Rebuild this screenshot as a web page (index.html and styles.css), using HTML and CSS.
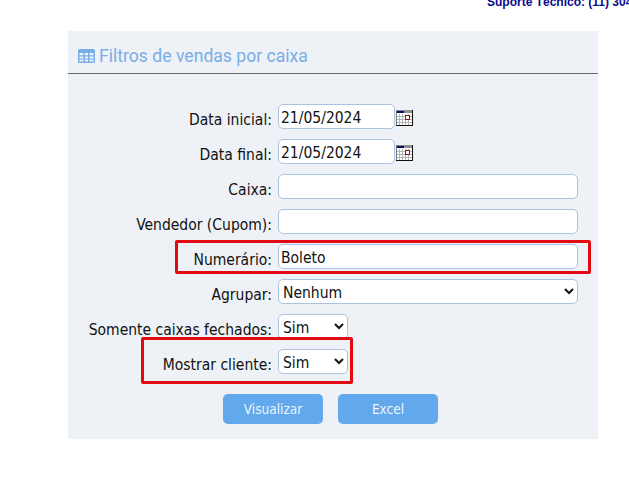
FILE: index.html
```html
<!DOCTYPE html>
<html lang="pt-BR">
<head>
<meta charset="utf-8">
<title>Filtros de vendas por caixa</title>
<link rel="stylesheet" href="styles.css">
</head>
<body>
<div class="support">Suporte Técnico: (11) 304</div>
<main class="panel">
  <h1 class="title">
    <svg class="title-icon" width="17" height="14" viewBox="0 0 17 14" aria-hidden="true">
      <path fill-rule="evenodd" fill="#7aaee6" d="M1.5 0h14A1.5 1.5 0 0 1 17 1.5v11a1.5 1.5 0 0 1-1.500 1.500h-14A1.500 1.500 0 0 1 0 12.500v-11A1.500 1.500 0 0 1 1.500 0zM1.500 4v2.200h4V4zm5.500 0v2.200h3V4zm4.500 0v2.200h4V4zM1.500 7.400v2h4v-2zm5.500 0v2h3v-2zm4.500 0v2h4v-2zM1.500 10.600v2h4v-2zm5.500 0v2h3v-2zm4.500 0v2h4v-2z"/>
    </svg>
    <span>Filtros de vendas por caixa</span>
  </h1>
  <form class="form">
    <label class="lbl">Data inicial:</label>
    <div class="ctl"><input class="field date" value="21/05/2024"><svg class="cal" width="17" height="16" viewBox="0 0 17 16" aria-hidden="true"><rect x="0" y="0" width="16" height="15" fill="#fff"/><rect x="0" y="0" width="16" height="3" fill="#8f8f8f"/><rect x="1" y="1" width="7" height="2" fill="#0a0a6e"/><path d="M1 6.500h15M1 9.500h15M1 12.500h15M3.500 4v11M6.500 4v11M9.500 4v11M12.500 4v11" stroke="#b5b5b5" fill="none"/><rect x="9.500" y="5.500" width="4" height="4" fill="#fff" stroke="#8b1a1a"/><path d="M16.500 0v16M0 15.500h17" stroke="#111" fill="none"/><path d="M0.500 0v15" stroke="#777"/></svg></div>
    <label class="lbl">Data final:</label>
    <div class="ctl"><input class="field date" value="21/05/2024"><svg class="cal" width="17" height="16" viewBox="0 0 17 16" aria-hidden="true"><rect x="0" y="0" width="16" height="15" fill="#fff"/><rect x="0" y="0" width="16" height="3" fill="#8f8f8f"/><rect x="1" y="1" width="7" height="2" fill="#0a0a6e"/><path d="M1 6.500h15M1 9.500h15M1 12.500h15M3.500 4v11M6.500 4v11M9.500 4v11M12.500 4v11" stroke="#b5b5b5" fill="none"/><rect x="9.500" y="5.500" width="4" height="4" fill="#fff" stroke="#8b1a1a"/><path d="M16.500 0v16M0 15.500h17" stroke="#111" fill="none"/><path d="M0.500 0v15" stroke="#777"/></svg></div>
    <label class="lbl">Caixa:</label>
    <div class="ctl"><input class="field wide"></div>
    <label class="lbl">Vendedor (Cupom):</label>
    <div class="ctl"><input class="field wide"></div>
    <label class="lbl">Numerário:</label>
    <div class="ctl"><input class="field wide" value="Boleto"></div>
    <label class="lbl">Agrupar:</label>
    <div class="ctl"><select class="field wide"><option>Nenhum</option></select></div>
    <label class="lbl">Somente caixas fechados:</label>
    <div class="ctl"><select class="field short"><option>Sim</option></select></div>
    <label class="lbl">Mostrar cliente:</label>
    <div class="ctl"><select class="field short"><option>Sim</option></select></div>
  </form>
  <div class="actions">
    <button class="btn" type="button">Visualizar</button>
    <button class="btn" type="button">Excel</button>
  </div>
</main>
<div class="mark mark-num"></div>
<div class="mark mark-cli"></div>
</body>
</html>
```
FILE: styles.css
```css
* { box-sizing: border-box; }
html, body { margin: 0; padding: 0; background: #fff; overflow: hidden; }
body { width: 629px; height: 480px; position: relative; font-family: "DejaVu Sans", sans-serif; font-stretch: condensed; color: #111; }
.support {
  height: 31px;
  margin-top: -5px;
  margin-bottom: 5px;
  padding-left: 487px;
  white-space: nowrap;
  font: bold 12px "Liberation Sans", sans-serif;
  color: #0a0a8c;
}
.panel { width: 530px; height: 408px; margin-left: 68px; background: #eef1f6; }
.title {
  height: 43px;
  margin: 0;
  padding: 15px 0 0 10px;
  display: flex;
  align-items: flex-start;
  gap: 4px;
  font: 400 17.600px/20px Roboto, sans-serif;
  color: #7aaee6;
  border-bottom: 1px solid #666a70;
}
.title-icon { margin-top: 3px; }
.form {
  margin-top: 30px;
  display: grid;
  grid-template-columns: 204px 1fr;
  column-gap: 6px;
  row-gap: 10px;
  grid-auto-rows: 25px;
}
.lbl { text-align: right; font-size: 15.500px; line-height: 33px; height: 25px; white-space: nowrap; }
.ctl { display: flex; align-items: center; gap: 1px; }
.field {
  height: 25px;
  padding: 2px 2px 0;
  border: 1px solid #a9c4e0;
  border-radius: 5px;
  background: #fff;
  font-family: "DejaVu Sans", sans-serif;
  font-stretch: condensed;
  font-size: 15.500px;
  color: #111;
  outline: none;
}
select.field { padding: 2px 0 0; }
.date { width: 117px; }
.wide { width: 300px; }
.short { width: 70px; }
.cal { margin-top: 3px; }
.actions { margin-top: 20px; padding-left: 155px; display: flex; gap: 15px; }
.btn {
  width: 100px;
  height: 30px;
  border: 0;
  border-radius: 5px;
  background: #62a8ec;
  color: #eef5fc;
  font-family: "DejaVu Sans", sans-serif;
  font-stretch: condensed;
  font-size: 13.500px;
}
.mark { position: absolute; border: 3.500px solid #e30b13; border-radius: 2px; }
.mark-num { left: 175px; top: 240px; width: 416px; height: 34px; }
.mark-cli { left: 141px; top: 337px; width: 212px; height: 47px; }
```
